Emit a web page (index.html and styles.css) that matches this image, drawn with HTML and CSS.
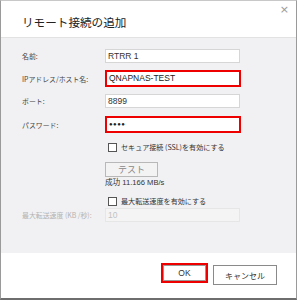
FILE: index.html
```html
<!DOCTYPE html>
<html lang="ja">
<head>
<meta charset="utf-8">
<link rel="stylesheet" href="styles.css">
</head>
<body>
<div class="dialog">
  <div class="titlebar">
    <span class="title">リモート接続の追加</span>
    <span class="close">×</span>
  </div>
  <div class="content">
    <div class="row r1">
      <span class="label">名前:</span>
      <div class="input">RTRR 1</div>
    </div>
    <div class="row r2">
      <span class="label">IPアドレス/ホスト名:</span>
      <div class="input hl">QNAPNAS-TEST</div>
    </div>
    <div class="row r3">
      <span class="label">ポート:</span>
      <div class="input">8899</div>
    </div>
    <div class="row r4">
      <span class="label">パスワード:</span>
      <div class="input hl pw">●●●●</div>
    </div>
    <div class="row check r5">
      <span class="box"></span><span class="ctext">セキュア接続 (SSL)を有効にする</span>
    </div>
    <div class="row r6">
      <div class="testbtn">テスト</div>
    </div>
    <div class="row r7">
      <span class="result">成功 11.166 MB/s</span>
    </div>
    <div class="row check r8">
      <span class="box"></span><span class="ctext">最大転送速度を有効にする</span>
    </div>
    <div class="row r9">
      <span class="label dis">最大転送速度 (KB /秒):</span>
      <div class="input disabled">10</div>
    </div>
  </div>
  <div class="footer">
    <div class="btn ok">OK</div>
    <div class="btn cancel">キャンセル</div>
  </div>
</div>
</body>
</html>
```
FILE: styles.css
```css
html, body {
  margin: 0;
  padding: 0;
  background: #ffffff;
}
body {
  width: 298px;
  height: 300px;
  font-family: "Liberation Sans", "Noto Sans CJK JP", sans-serif;
  color: #333;
}
.dialog {
  width: 295px;
  height: 297px;
  border-left: 1px solid #9a9a9a;
  border-right: 1px solid #9a9a9a;
  border-top: 1px solid #c8c8c8;
  border-bottom: 2px solid #6e6e6e;
  display: flex;
  flex-direction: column;
  background: #fff;
}
.titlebar {
  height: 36px;
  position: relative;
  display: flex;
  align-items: center;
  padding-left: 21px;
  border-bottom: 1px solid #e2e2e2;
}
.title {
  font-family: "Noto Sans CJK JP", sans-serif;
  font-size: 11.6px;
  color: #222;
  margin-top: 5px;
}
.close {
  position: absolute;
  right: 7px;
  top: 2px;
  font-size: 11px;
  color: #999;
  font-family: "DejaVu Sans", sans-serif;
}
.content {
  height: 215px;
  background: #f1f1f3;
  padding-top: 11px;
  box-sizing: border-box;
}
.row {
  display: flex;
  align-items: center;
  padding-left: 104px;
  position: relative;
}
.label {
  position: absolute;
  left: 21px;
  font-family: "Noto Sans CJK JP", sans-serif;
  font-size: 6.9px;
  color: #444;
}
.label.dis {
  color: #b4b4b4;
}
.input {
  width: 131px;
  height: 12px;
  border: 1px solid #d6d6d6;
  background: #fff;
  font-size: 8.5px;
  line-height: 12px;
  padding-left: 2px;
  color: #333;
}
.input.hl {
  border: 2px solid #ee0000;
  width: 130px;
  height: 13px;
  line-height: 13px;
  color: #222;
}
.input.pw {
  font-size: 6px;
  letter-spacing: 0.5px;
}
.input.disabled {
  background: #f4f4f4;
  border-color: #e6e6e6;
  color: #c2c2c2;
}
.r2 { margin-top: 7px; }
.r3 { margin-top: 7px; }
.r4 { margin-top: 8px; }
.r5 { margin-top: 9px; }
.r6 { margin-top: 10px; }
.r7 { margin-top: 1px; }
.r8 { margin-top: 9px; }
.r9 { margin-top: 2px; }
.check {
  padding-left: 107px;
  height: 10px;
}
.box {
  width: 7px;
  height: 7px;
  border: 1px solid #555;
  background: #fff;
}
.ctext {
  margin-left: 4px;
  font-family: "Noto Sans CJK JP", sans-serif;
  font-size: 7.1px;
  color: #333;
}
.testbtn {
  width: 51px;
  height: 13px;
  border: 1px solid #b8b8b8;
  background: #f3f3f3;
  font-family: "Noto Sans CJK JP", sans-serif;
  font-size: 9px;
  color: #888;
  text-align: center;
  line-height: 14px;
}
.result {
  font-family: "Liberation Sans", "Noto Sans CJK JP", sans-serif;
  font-size: 7.6px;
  color: #333;
  height: 9px;
  line-height: 9px;
}
.footer {
  flex: 1;
  display: flex;
  justify-content: flex-end;
  align-items: flex-start;
  padding-top: 11px;
  padding-right: 19px;
  gap: 5px;
}
.btn {
  height: 18px;
  border: 1px solid #8a8a8a;
  background: #fff;
  font-family: "Liberation Sans", "Noto Sans CJK JP", sans-serif;
  font-size: 8.5px;
  color: #333;
  display: flex;
  align-items: center;
  justify-content: center;
}
.btn.ok {
  width: 43px;
  height: 16px;
  border: 2px solid #ee0000;
  outline: 1px solid #999;
  outline-offset: -3px;
  margin-top: -1px;
}
.btn.cancel {
  width: 62px;
  margin-top: 1px;
  font-size: 8px;
  font-family: "Noto Sans CJK JP", sans-serif;
}
```
